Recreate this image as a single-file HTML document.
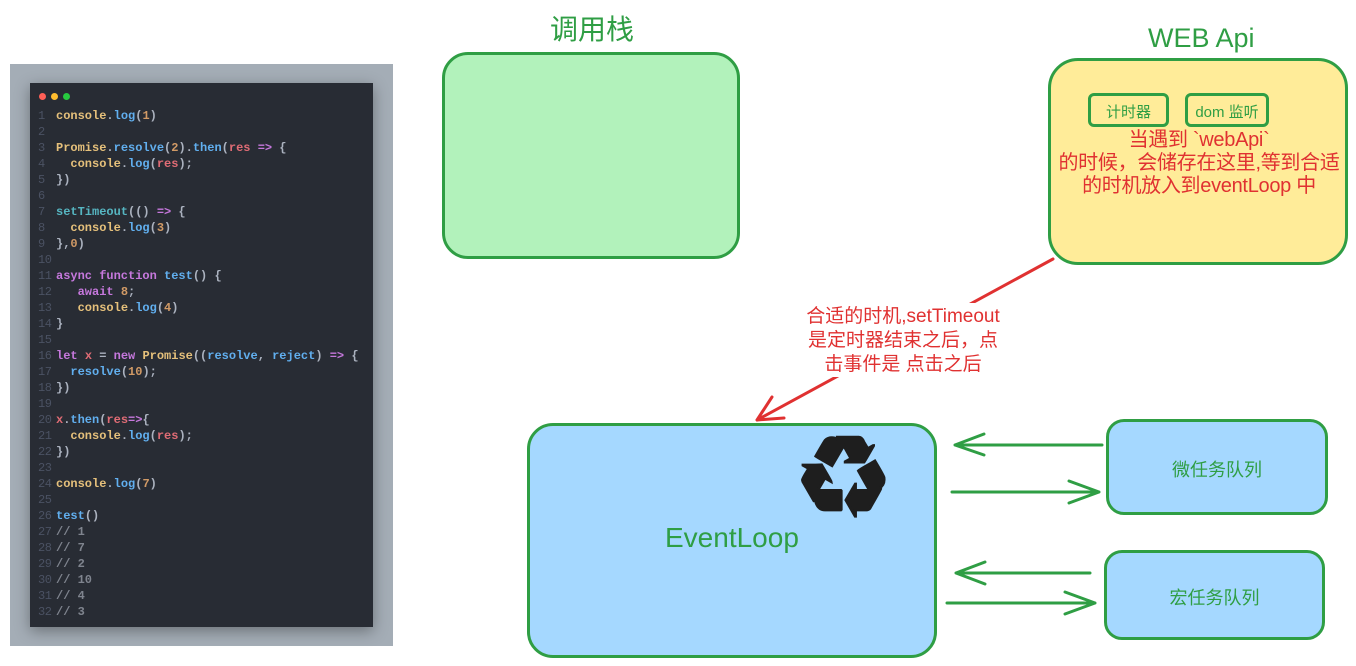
<!DOCTYPE html>
<html><head><meta charset="utf-8"><style>
body{margin:0;width:1356px;height:666px;background:#fff;position:relative;overflow:hidden;font-family:"Liberation Sans","Noto Sans CJK SC",sans-serif}
.abs{position:absolute}
.code{left:10px;top:64px;width:383px;height:582px;background:#a4adb6}
.panel{left:30px;top:83px;width:343px;height:544px;background:#282c34;box-shadow:0 4px 14px rgba(0,0,0,.35)}
.dot{position:absolute;top:10px;width:7px;height:7px;border-radius:50%}
pre{position:absolute;left:8px;top:25px;margin:0;font-family:"Liberation Mono","DejaVu Sans Mono",monospace;font-size:12px;line-height:16px;color:#abb2bf;font-weight:bold}
.n{color:#4b5263;font-weight:normal;display:inline-block;width:18px;letter-spacing:-0.5px}
.y{color:#e5c07b}.b{color:#61afef}.o{color:#d19a66}.r{color:#e06c75}.p{color:#c678dd}.c{color:#56b6c2}.g{color:#7f848e}
.box{position:absolute;border:3.5px solid #2f9e44;box-sizing:border-box}
.t{position:absolute;color:#2f9e44;white-space:nowrap}
.red{position:absolute;color:#e03131;font-size:19px;line-height:23px;text-align:center;white-space:nowrap}
</style></head><body>
<div class="abs code"></div>
<div class="abs panel">
<div class="dot" style="left:9px;background:#ff5f56"></div>
<div class="dot" style="left:21px;background:#ffbd2e"></div>
<div class="dot" style="left:33px;background:#27c93f"></div>
<pre><span class="n">1</span><span class="y">console</span>.<span class="b">log</span>(<span class="o">1</span>)
<span class="n">2</span>
<span class="n">3</span><span class="y">Promise</span>.<span class="b">resolve</span>(<span class="o">2</span>).<span class="b">then</span>(<span class="r">res</span> <span class="p">=&gt;</span> {
<span class="n">4</span>  <span class="y">console</span>.<span class="b">log</span>(<span class="r">res</span>);
<span class="n">5</span>})
<span class="n">6</span>
<span class="n">7</span><span class="c">setTimeout</span>(() <span class="p">=&gt;</span> {
<span class="n">8</span>  <span class="y">console</span>.<span class="b">log</span>(<span class="o">3</span>)
<span class="n">9</span>},<span class="o">0</span>)
<span class="n">10</span>
<span class="n">11</span><span class="p">async function</span> <span class="b">test</span>() {
<span class="n">12</span>   <span class="p">await</span> <span class="o">8</span>;
<span class="n">13</span>   <span class="y">console</span>.<span class="b">log</span>(<span class="o">4</span>)
<span class="n">14</span>}
<span class="n">15</span>
<span class="n">16</span><span class="p">let</span> <span class="r">x</span> = <span class="p">new</span> <span class="y">Promise</span>((<span class="b">resolve</span>, <span class="b">reject</span>) <span class="p">=&gt;</span> {
<span class="n">17</span>  <span class="b">resolve</span>(<span class="o">10</span>);
<span class="n">18</span>})
<span class="n">19</span>
<span class="n">20</span><span class="r">x</span>.<span class="b">then</span>(<span class="r">res</span><span class="p">=&gt;</span>{
<span class="n">21</span>  <span class="y">console</span>.<span class="b">log</span>(<span class="r">res</span>);
<span class="n">22</span>})
<span class="n">23</span>
<span class="n">24</span><span class="y">console</span>.<span class="b">log</span>(<span class="o">7</span>)
<span class="n">25</span>
<span class="n">26</span><span class="b">test</span>()
<span class="n">27</span><span class="g">// 1</span>
<span class="n">28</span><span class="g">// 7</span>
<span class="n">29</span><span class="g">// 2</span>
<span class="n">30</span><span class="g">// 10</span>
<span class="n">31</span><span class="g">// 4</span>
<span class="n">32</span><span class="g">// 3</span></pre>
</div>

<div class="t" style="left:550px;top:8px;font-size:28px">调用栈</div>
<div class="box" style="left:442px;top:52px;width:298px;height:207px;background:#b2f2bb;border-radius:26px"></div>

<div class="t" style="left:1148px;top:23px;font-size:27px">WEB Api</div>
<div class="box" style="left:1048px;top:58px;width:300px;height:207px;background:#ffec99;border-radius:30px"></div>
<div class="box" style="left:1088px;top:93px;width:81px;height:34px;border-radius:6px"></div>
<div class="t" style="left:1088px;top:101px;width:81px;text-align:center;font-size:15px">计时器</div>
<div class="box" style="left:1185px;top:93px;width:84px;height:34px;border-radius:6px"></div>
<div class="t" style="left:1185px;top:101px;width:84px;text-align:center;font-size:15px">dom 监听</div>
<div class="red" style="left:1050px;top:129px;width:298px;font-size:20px;letter-spacing:-0.3px">当遇到 `webApi`<br>的时候，会储存在这里,等到合适<br>的时机放入到eventLoop 中</div>

<svg class="abs" style="left:0;top:0" width="1356" height="666" fill="none" stroke-linecap="round" stroke-linejoin="round">
<g stroke="#2f9e44" stroke-width="3">
<path d="M1102 445H955M984 434L955 445L984 455"/>
<path d="M952 492H1099M1069 481L1099 492L1069 503"/>
<path d="M1090 573H956M985 562L956 573L985 584"/>
<path d="M947 603H1095M1065 592L1095 603L1065 614"/>
</g>
<g stroke="#e03131" stroke-width="3">
<path d="M1053 259L757 420M772 397L757 420L784 418"/>
</g>
</svg>

<div class="red" style="left:798px;top:303px;width:210px;background:#fff;font-size:19px;line-height:24px;padding-top:2px">合适的时机,setTimeout<br>是定时器结束之后，点<br>击事件是 点击之后</div>

<div class="box" style="left:527px;top:423px;width:410px;height:235px;background:#a5d8ff;border-radius:26px"></div>
<div class="t" style="left:665px;top:522px;font-size:28px">EventLoop</div>
<div class="abs" style="left:793px;top:418px;font-size:112px;line-height:120px;color:#1e1e1e;font-family:'DejaVu Sans',sans-serif;-webkit-text-stroke:3px #1e1e1e">♻</div>

<div class="box" style="left:1106px;top:419px;width:222px;height:96px;background:#a5d8ff;border-radius:18px"></div>
<div class="t" style="left:1106px;top:456px;width:222px;text-align:center;font-size:18px">微任务队列</div>
<div class="box" style="left:1104px;top:550px;width:221px;height:90px;background:#a5d8ff;border-radius:18px"></div>
<div class="t" style="left:1104px;top:584px;width:221px;text-align:center;font-size:18px">宏任务队列</div>
</body></html>
